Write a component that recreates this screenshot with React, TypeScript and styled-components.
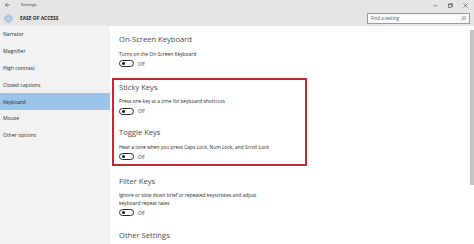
import React from 'react';
import styled, { createGlobalStyle } from 'styled-components';

const Global = createGlobalStyle`
  html, body { margin: 0; padding: 0; background: #ffffff; }
  body { font-family: "Open Sans", "Noto Sans", sans-serif; color: #222; }
  #root { width: 474px; height: 244px; overflow: hidden; }
`;

const Window = styled.div`
  width: 474px;
  height: 244px;
  display: flex;
  flex-direction: column;
  background: #ffffff;
  overflow: hidden;
`;

const TitleBar = styled.div`
  height: 10px;
  flex: none;
  display: flex;
  align-items: center;
  background: #e6e6e6;
  padding-left: 5px;
`;

const TitleText = styled.span`
  font-size: 4.2px;
  line-height: 10px;
  color: #333;
  margin-left: 11px;
`;

const Spacer = styled.div`
  flex: 1;
`;

const Controls = styled.div`
  display: flex;
  margin-right: 1.5px;
`;

const ControlButton = styled.div`
  width: 15px;
  height: 10px;
  display: flex;
  align-items: center;
  justify-content: center;
`;

const Header = styled.div`
  height: 16px;
  flex: none;
  display: flex;
  align-items: center;
  background: #e6e6e6;
  padding-left: 3.5px;
  padding-right: 4px;
`;

const SectionLabel = styled.span`
  font-size: 4.8px;
  font-weight: 700;
  color: #222;
  margin-left: 7.5px;
  letter-spacing: 0.05px;
`;

const SearchBox = styled.div`
  width: 103px;
  height: 11px;
  box-sizing: border-box;
  border: 1px solid #9a9a9a;
  background: #fafafa;
  display: flex;
  align-items: center;
  padding: 0 3px 0 3px;
`;

const SearchText = styled.span`
  flex: 1;
  font-size: 4.5px;
  color: #555;
`;

const Body = styled.div`
  flex: 1;
  display: flex;
  min-height: 0;
`;

const Sidebar = styled.nav`
  width: 110px;
  flex: none;
  background: #f2f2f2;
  display: flex;
  flex-direction: column;
`;

const NavItem = styled.div<{ $active?: boolean }>`
  height: 16.8px;
  display: flex;
  align-items: center;
  padding-left: 3px;
  font-size: 5.1px;
  color: #2a2a2a;
  background: ${(p) => (p.$active ? '#9cc3e9' : 'transparent')};
`;

const Content = styled.main`
  flex: 1;
  padding: 7px 0 0 9px;
  display: flex;
  flex-direction: column;
  align-items: flex-start;
  overflow: hidden;
`;

const Section = styled.section<{ $gap?: number }>`
  margin-top: ${(p) => p.$gap ?? 0}px;
  display: flex;
  flex-direction: column;
  align-items: flex-start;
`;

const Heading = styled.h2`
  margin: 0;
  font-size: 7.6px;
  line-height: 12px;
  font-weight: 400;
  color: #4a4a4a;
  white-space: nowrap;
`;

const Desc = styled.p`
  margin: 5.5px 0 0 0;
  font-size: 4.9px;
  line-height: 7.5px;
  color: #262626;
  white-space: nowrap;
`;

const ToggleRow = styled.div`
  margin-top: 2px;
  height: 7px;
  display: flex;
  align-items: center;
`;

const Switch = styled.div`
  width: 15px;
  height: 7px;
  box-sizing: border-box;
  border: 1px solid #2b2b2b;
  border-radius: 4px;
  display: flex;
  align-items: center;
  padding-left: 1.5px;
`;

const Knob = styled.div`
  width: 3px;
  height: 3px;
  border-radius: 50%;
  background: #111;
`;

const OffLabel = styled.span`
  margin-left: 4px;
  font-size: 4.5px;
  color: #333;
`;

const HighlightBox = styled.div`
  width: 195px;
  box-sizing: border-box;
  margin: 10.5px 0 9px -7px;
  padding: 1px 0 3.5px 5px;
  border: 2px solid #bf2a35;
  display: flex;
  flex-direction: column;
`;

const Scrollbar = styled.div`
  width: 4px;
  flex: none;
  background: #ffffff;
  display: flex;
  flex-direction: column;
`;

const Thumb = styled.div`
  margin-top: 4px;
  height: 155px;
  background: #c4c4c4;
`;

const Toggle = () => (
  <ToggleRow>
    <Switch>
      <Knob />
    </Switch>
    <OffLabel>Off</OffLabel>
  </ToggleRow>
);

const BackArrow = () => (
  <svg width="5" height="4" viewBox="0 0 10 8" fill="none" stroke="#333" strokeWidth="1.2">
    <path d="M9.5 4H1M4.5 0.5L1 4l3.5 3.5" />
  </svg>
);

const AccessIcon = () => (
  <svg width="9" height="9" viewBox="0 0 18 18">
    <circle cx="9" cy="9" r="7.5" fill="none" stroke="#3d86d6" strokeWidth="1.6" strokeDasharray="2 1.4" />
    <circle cx="9" cy="9" r="4.6" fill="none" stroke="#5b9be0" strokeWidth="1.4" />
    <circle cx="9" cy="9" r="2" fill="#9cc4ee" />
  </svg>
);

const SearchIcon = () => (
  <svg width="5" height="5" viewBox="0 0 10 10" fill="none" stroke="#555" strokeWidth="1">
    <circle cx="6" cy="4" r="3" />
    <path d="M3.8 6.2L0.8 9.2" />
  </svg>
);

const MinIcon = () => (
  <svg width="5" height="5" viewBox="0 0 10 10">
    <path d="M1 5.5h8" stroke="#333" strokeWidth="1" />
  </svg>
);

const RestoreIcon = () => (
  <svg width="5" height="5" viewBox="0 0 10 10" fill="none" stroke="#333" strokeWidth="1.1">
    <rect x="1" y="3" width="6" height="6" />
    <path d="M3 3V1h6v6H7" />
  </svg>
);

const CloseIcon = () => (
  <svg width="5" height="5" viewBox="0 0 10 10" stroke="#333" strokeWidth="1.1">
    <path d="M1 1l8 8M9 1L1 9" />
  </svg>
);

const navItems = [
  'Narrator',
  'Magnifier',
  'High contrast',
  'Closed captions',
  'Keyboard',
  'Mouse',
  'Other options',
];

export default function App() {
  return (
    <>
      <Global />
      <Window>
        <TitleBar>
          <BackArrow />
          <TitleText>Settings</TitleText>
          <Spacer />
          <Controls>
            <ControlButton>
              <MinIcon />
            </ControlButton>
            <ControlButton>
              <RestoreIcon />
            </ControlButton>
            <ControlButton>
              <CloseIcon />
            </ControlButton>
          </Controls>
        </TitleBar>
        <Header>
          <AccessIcon />
          <SectionLabel>EASE OF ACCESS</SectionLabel>
          <Spacer />
          <SearchBox>
            <SearchText>Find a setting</SearchText>
            <SearchIcon />
          </SearchBox>
        </Header>
        <Body>
          <Sidebar>
            {navItems.map((item) => (
              <NavItem key={item} $active={item === 'Keyboard'}>
                {item}
              </NavItem>
            ))}
          </Sidebar>
          <Content>
            <Section>
              <Heading>On-Screen Keyboard</Heading>
              <Desc>Turns on the On-Screen Keyboard</Desc>
              <Toggle />
            </Section>
            <HighlightBox>
              <Section>
                <Heading>Sticky Keys</Heading>
                <Desc>Press one key at a time for keyboard shortcuts</Desc>
                <Toggle />
              </Section>
              <Section $gap={11.5}>
                <Heading>Toggle Keys</Heading>
                <Desc>Hear a tone when you press Caps Lock, Num Lock, and Scroll Lock</Desc>
                <Toggle />
              </Section>
            </HighlightBox>
            <Section>
              <Heading>Filter Keys</Heading>
              <Desc>
                Ignore or slow down brief or repeated keystrokes and adjust
                <br />
                keyboard repeat rates
              </Desc>
              <Toggle />
            </Section>
            <Section $gap={12.5}>
              <Heading>Other Settings</Heading>
            </Section>
          </Content>
          <Scrollbar>
            <Thumb />
          </Scrollbar>
        </Body>
      </Window>
    </>
  );
}
